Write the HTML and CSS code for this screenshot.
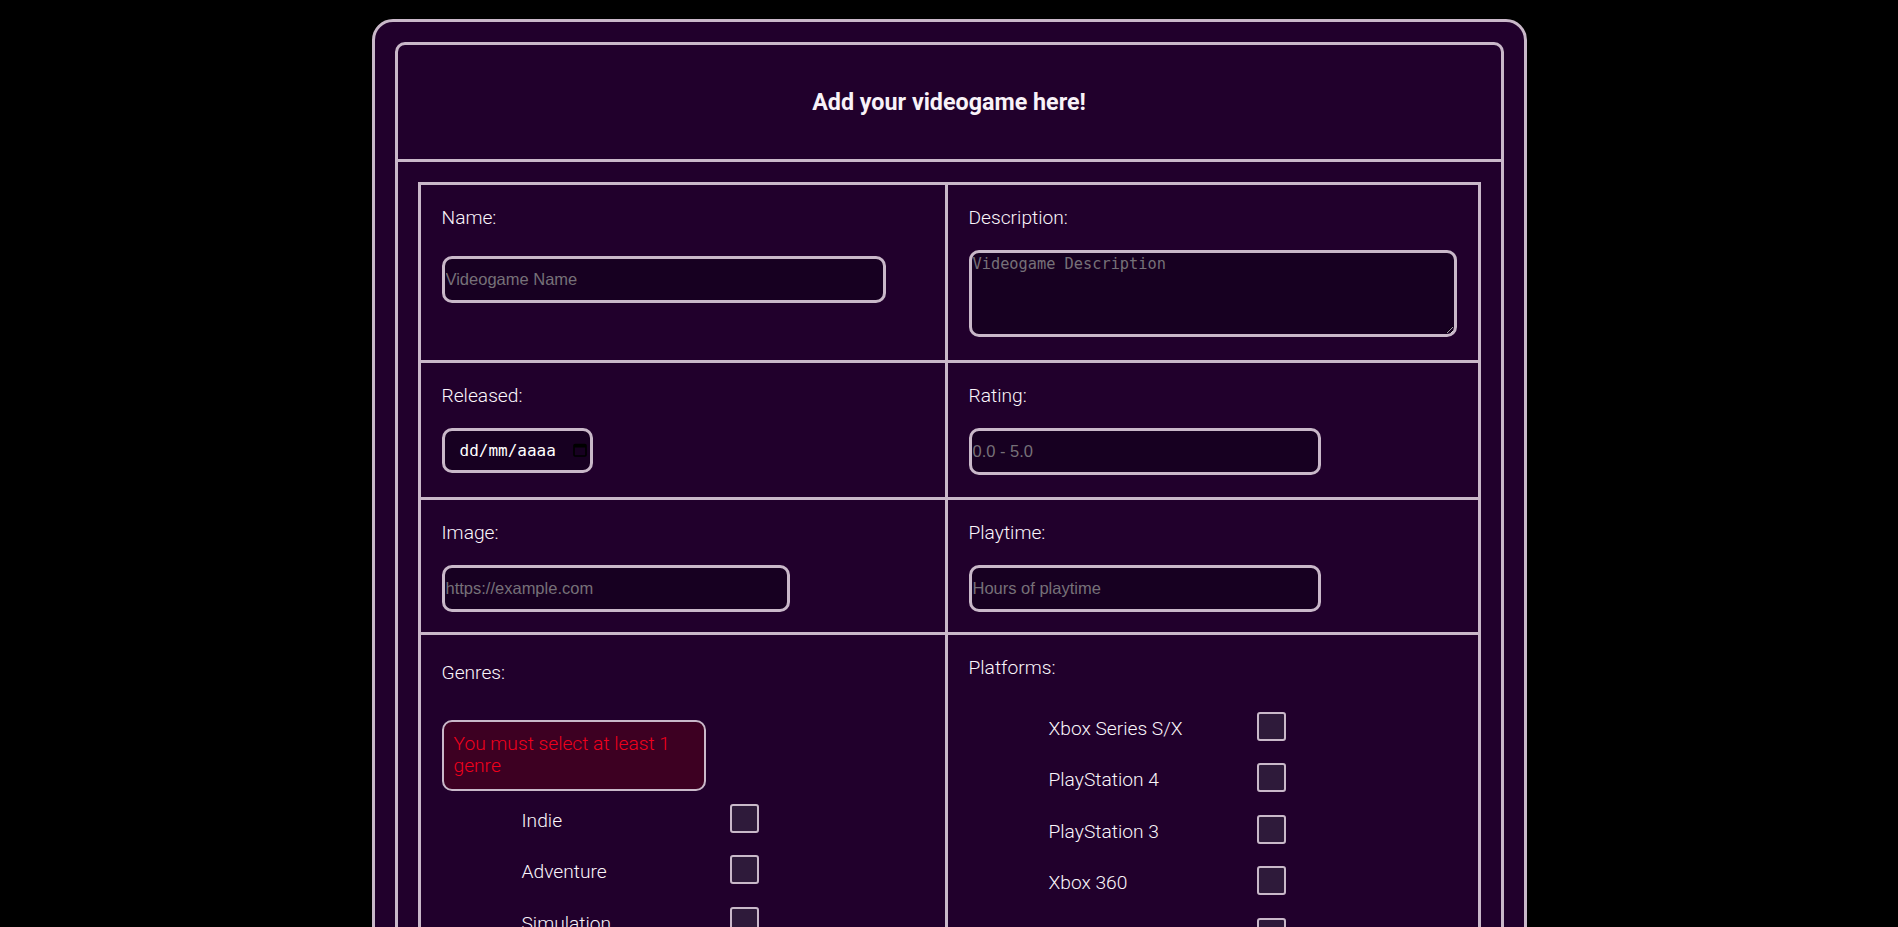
FILE: index.html
```html
<!DOCTYPE html>
<html lang="en">
<head>
<meta charset="utf-8">
<title>Add your videogame</title>
<link rel="stylesheet" href="styles.css">
</head>
<body>
<div class="frame">
  <form class="card">
    <header class="card-header">
      <h1 class="title">Add your videogame here!</h1>
    </header>
    <div class="card-body">
      <div class="grid">
        <div class="cell">
          <label class="field-label">Name:</label>
          <input class="control control-name" type="text" placeholder="Videogame Name">
        </div>
        <div class="cell">
          <label class="field-label">Description:</label>
          <textarea class="control control-area" placeholder="Videogame Description"></textarea>
        </div>
        <div class="cell">
          <label class="field-label">Released:</label>
          <div class="control control-date">
            <span class="date-text">dd/mm/aaaa</span>
            <svg class="cal-icon" width="14" height="14" viewBox="0 0 14 14"><rect x="1" y="1.5" width="12" height="11.5" rx="1" fill="none" stroke="#000" stroke-width="1.6"/><rect x="1" y="1.5" width="12" height="3" fill="#000"/></svg>
          </div>
        </div>
        <div class="cell">
          <label class="field-label">Rating:</label>
          <input class="control control-mid" type="text" placeholder="0.0 - 5.0">
        </div>
        <div class="cell">
          <label class="field-label">Image:</label>
          <input class="control control-img" type="text" placeholder="https://example.com">
        </div>
        <div class="cell">
          <label class="field-label">Playtime:</label>
          <input class="control control-mid" type="text" placeholder="Hours of playtime">
        </div>
        <div class="cell cell-genres">
          <label class="field-label">Genres:</label>
          <div class="error">You must select at least 1 genre</div>
          <ul class="options options-genres">
            <li class="option"><span class="option-label">Indie</span><input class="check" type="checkbox"></li>
            <li class="option"><span class="option-label">Adventure</span><input class="check" type="checkbox"></li>
            <li class="option"><span class="option-label">Simulation</span><input class="check" type="checkbox"></li>
            <li class="option"><span class="option-label">Puzzle</span><input class="check" type="checkbox"></li>
            <li class="option"><span class="option-label">Action</span><input class="check" type="checkbox"></li>
          </ul>
        </div>
        <div class="cell cell-platforms">
          <label class="field-label">Platforms:</label>
          <ul class="options options-platforms">
            <li class="option"><span class="option-label">Xbox Series S/X</span><input class="check" type="checkbox"></li>
            <li class="option"><span class="option-label">PlayStation 4</span><input class="check" type="checkbox"></li>
            <li class="option"><span class="option-label">PlayStation 3</span><input class="check" type="checkbox"></li>
            <li class="option"><span class="option-label">Xbox 360</span><input class="check" type="checkbox"></li>
            <li class="option"><span class="option-label">Linux</span><input class="check" type="checkbox"></li>
            <li class="option"><span class="option-label">PC</span><input class="check" type="checkbox"></li>
          </ul>
        </div>
      </div>
    </div>
  </form>
</div>
</body>
</html>
```
FILE: styles.css
```css
* { box-sizing: border-box; }

body {
  margin: 0;
  padding-top: 19px;
  background: #000;
  font-family: Roboto, "Liberation Sans", Arial, sans-serif;
  color: #fbf6fb;
}

.frame {
  width: 1155px;
  margin: 0 auto;
  padding: 20px;
  border: 3px solid #c9b8c9;
  border-radius: 21px;
  background: #21002c;
}

.card {
  border: 3px solid #c9b8c9;
  border-radius: 10px;
}

.card-header {
  height: 117px;
  border-bottom: 3px solid #c9b8c9;
  display: flex;
  align-items: center;
  justify-content: center;
}

.title {
  margin: 0;
  font-size: 23.3px;
  font-weight: 700;
  color: #f8f2f8;
}

.card-body {
  padding: 20px;
}

.grid {
  display: grid;
  grid-template-columns: 524px 1fr;
  grid-template-rows: 175px 134px 132px auto;
  gap: 3px;
  background: #c9b8c9;
  border: 3px solid #c9b8c9;
}

.cell {
  background: #21002c;
  padding: 22px 21px 21px;
}

.field-label {
  display: block;
  font-size: 19.2px;
  line-height: 22.5px;
  font-weight: 300;
}

.control {
  display: block;
  margin-top: 20px;
  height: 47px;
  padding: 1px;
  border: 3px solid #c9b8c9;
  border-radius: 10px;
  background: #170021;
  color: #fff;
  font: 16.5px "Liberation Sans", Arial, sans-serif;
  outline: none;
}

.control::placeholder { color: #767078; }

.control-name { width: 444px; margin-top: 26px; }
.control-img { width: 348px; }
.control-mid { width: 352px; }

.control-area {
  width: 488px;
  height: 87px;
  padding: 2px 1px;
  font: 15.3px "DejaVu Sans Mono", "Liberation Mono", monospace;
}

.control-date {
  width: 151px;
  height: 45px;
  display: flex;
  align-items: center;
  padding: 0 0 0 15px;
  font: 16px "DejaVu Sans Mono", "Liberation Mono", monospace;
  color: #fff;
}

.date-text { width: 113px; }

.cal-icon { display: block; }

.cell-genres { padding-top: 27px; }
.cell-platforms { padding-top: 22px; }

.error {
  width: 264px;
  margin-top: 35px;
  padding: 11px 10px;
  border: 2px solid #c9b8c9;
  border-radius: 10px;
  background: #3d0022;
  color: #f0001c;
  font-size: 19.2px;
  line-height: 22.5px;
  font-weight: 300;
}

.options {
  list-style: none;
  margin: 13px 0 0;
  padding: 0 0 0 80px;
  display: flex;
  flex-direction: column;
  gap: 22.67px;
}

.options-platforms { margin-top: 32px; }

.option {
  display: flex;
  align-items: flex-start;
  height: 29px;
}

.option-label {
  width: 208px;
  margin-top: 6px;
  font-size: 19.2px;
  line-height: 22.5px;
  font-weight: 300;
}

.check {
  appearance: none;
  -webkit-appearance: none;
  margin: 0;
  width: 29px;
  height: 29px;
  border: 2px solid #c9b8c9;
  border-radius: 3px;
  background: #2e1a3a;
}
```
